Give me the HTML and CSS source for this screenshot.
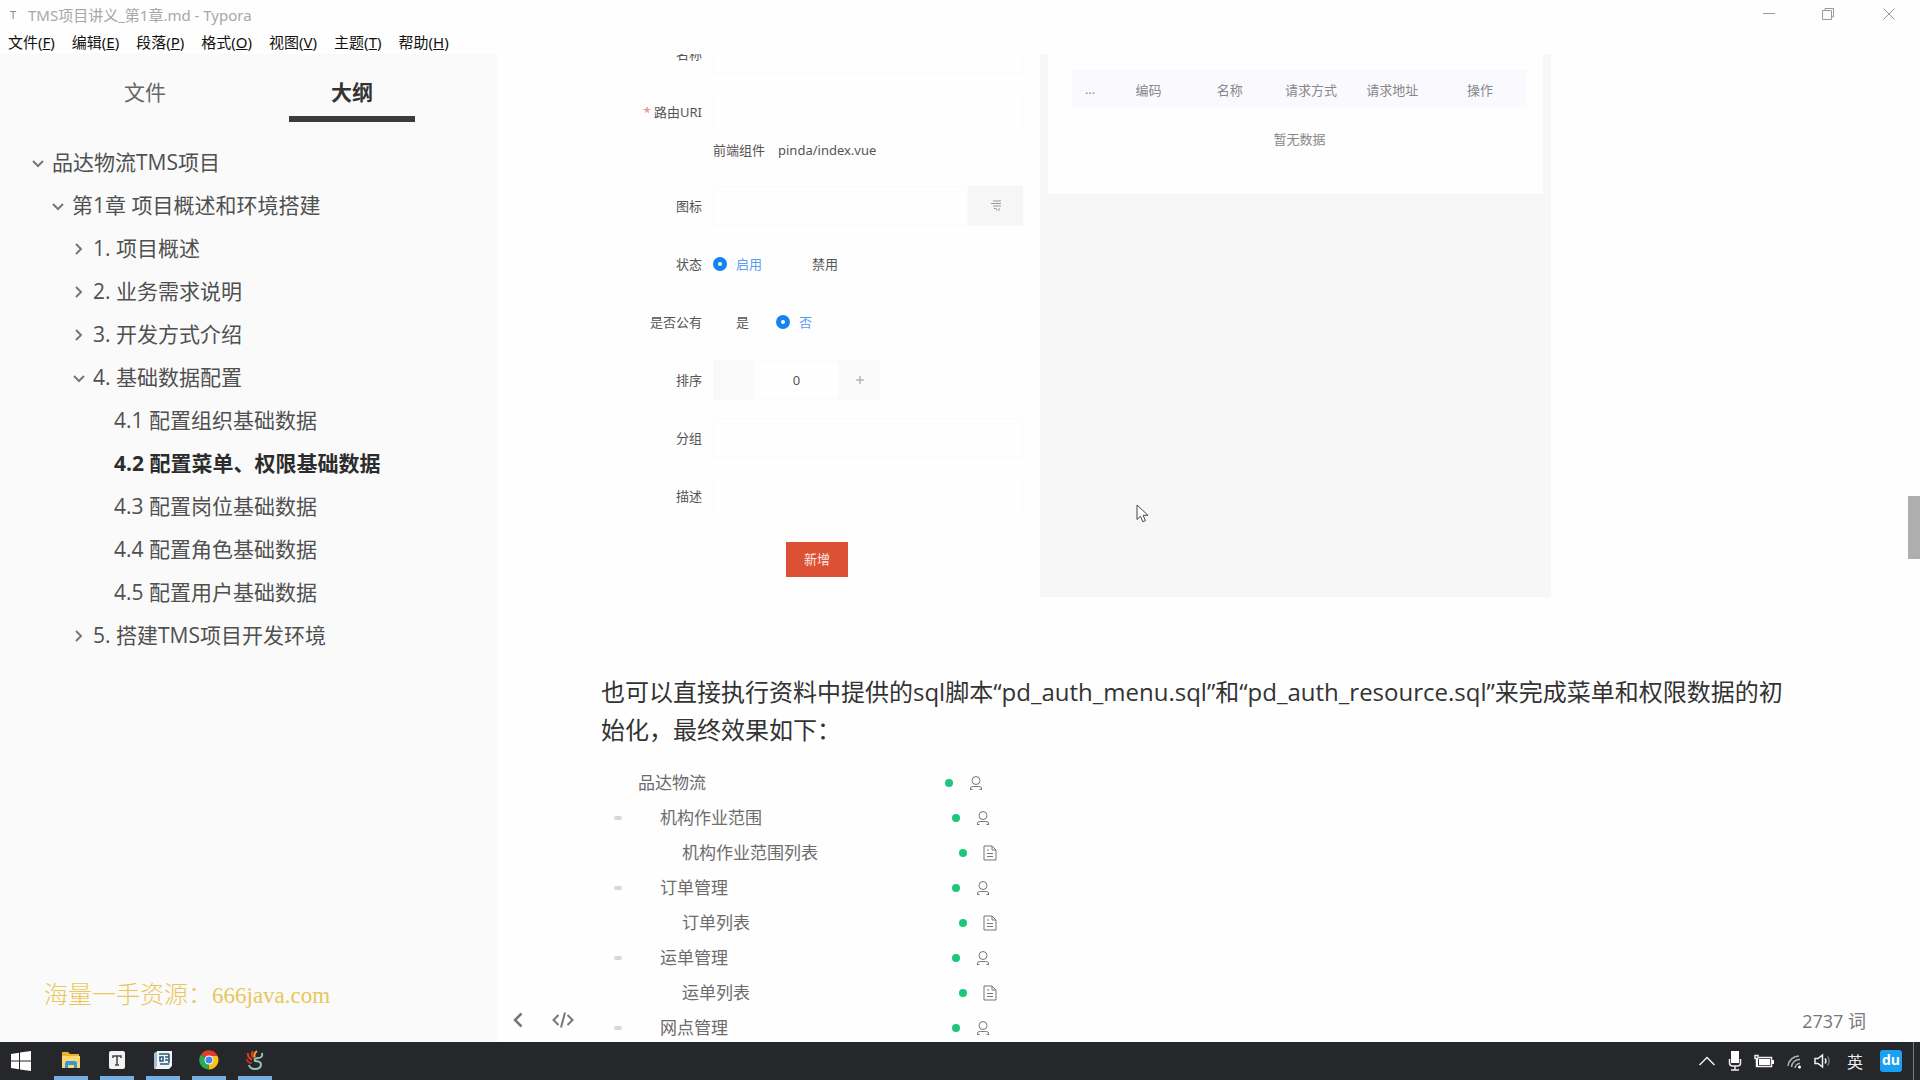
FILE: index.html
```html
<!DOCTYPE html>
<html lang="zh-CN">
<head>
<meta charset="utf-8">
<title>TMS项目讲义_第1章.md - Typora</title>
<link rel="stylesheet" href="styles.css">
</head>
<body>
<header class="titlebar">
  <div class="title-row">
    <span class="app-icon">T</span>
    <span class="title">TMS项目讲义_第1章.md - Typora</span>
    <div class="window-buttons">
      <button aria-label="最小化"><svg width="14" height="14" viewBox="0 0 14 14"><path d="M1 6.500h12"/></svg></button>
      <button aria-label="还原"><svg width="14" height="14" viewBox="0 0 14 14"><path d="M1.500 3.500h9v9h-9zM4 3V1.500h8.500V10h-1.500"/></svg></button>
      <button aria-label="关闭"><svg width="14" height="14" viewBox="0 0 14 14"><path d="M1.500 1.500l11 11M12.500 1.500l-11 11"/></svg></button>
    </div>
  </div>
  <nav class="menu">
    <button>文件(<u>F</u>)</button>
    <button>编辑(<u>E</u>)</button>
    <button>段落(<u>P</u>)</button>
    <button>格式(<u>O</u>)</button>
    <button>视图(<u>V</u>)</button>
    <button>主题(<u>T</u>)</button>
    <button>帮助(<u>H</u>)</button>
  </nav>
</header>

<main class="workspace">
  <aside class="sidebar">
    <div class="tabs">
      <button class="tab">文件</button>
      <button class="tab active">大纲</button>
    </div>
    <ul class="outline">
      <li class="l1"><svg class="chev" viewBox="0 0 12 12"><path d="M1 4l5 5 5-5"/></svg><a href="#">品达物流TMS项目</a></li>
      <li class="l2"><svg class="chev" viewBox="0 0 12 12"><path d="M1 4l5 5 5-5"/></svg><a href="#">第1章 项目概述和环境搭建</a></li>
      <li class="l3"><svg class="chev" viewBox="0 0 12 12"><path d="M3 1l5 5-5 5"/></svg><a href="#">1. 项目概述</a></li>
      <li class="l3"><svg class="chev" viewBox="0 0 12 12"><path d="M3 1l5 5-5 5"/></svg><a href="#">2. 业务需求说明</a></li>
      <li class="l3"><svg class="chev" viewBox="0 0 12 12"><path d="M3 1l5 5-5 5"/></svg><a href="#">3. 开发方式介绍</a></li>
      <li class="l3"><svg class="chev" viewBox="0 0 12 12"><path d="M1 4l5 5 5-5"/></svg><a href="#">4. 基础数据配置</a></li>
      <li class="l4"><a href="#">4.1 配置组织基础数据</a></li>
      <li class="l4 current"><a href="#">4.2 配置菜单、权限基础数据</a></li>
      <li class="l4"><a href="#">4.3 配置岗位基础数据</a></li>
      <li class="l4"><a href="#">4.4 配置角色基础数据</a></li>
      <li class="l4"><a href="#">4.5 配置用户基础数据</a></li>
      <li class="l3"><svg class="chev" viewBox="0 0 12 12"><path d="M3 1l5 5-5 5"/></svg><a href="#">5. 搭建TMS项目开发环境</a></li>
    </ul>
    <p class="watermark">海量一手资源：<span>666java.com</span></p>
  </aside>

  <section class="document">
    <div class="figure">
      <form class="menu-form">
        <label for="name">名称</label>
        <input id="name" class="box" type="text">

        <label for="uri"><span class="required">*</span> 路由URI</label>
        <div>
          <input id="uri" class="box" type="text">
          <p class="hint"><span>前端组件</span><span>pinda/index.vue</span></p>
        </div>

        <label for="icon">图标</label>
        <div class="joined">
          <input id="icon" class="box" type="text">
          <button type="button" class="pick" aria-label="选择图标"><svg width="12" height="14" viewBox="0 0 12 14"><path d="M3 2h8M1 4.500h10M3 7h8M4 9.500h2l1 2M9 9v3"/></svg></button>
        </div>

        <span class="label">状态</span>
        <div class="radios">
          <label><input type="radio" name="state" checked><span>启用</span></label>
          <label><input type="radio" name="state"><span>禁用</span></label>
        </div>

        <span class="label">是否公有</span>
        <div class="radios">
          <label><input type="radio" name="public"><span>是</span></label>
          <label><input type="radio" name="public" checked><span>否</span></label>
        </div>

        <label for="order">排序</label>
        <div class="stepper">
          <button type="button" aria-label="减少"></button>
          <input id="order" type="text" value="0">
          <button type="button" aria-label="增加"><svg width="10" height="10" viewBox="0 0 10 10"><path d="M1 5h8M5 1v8"/></svg></button>
        </div>

        <label for="group">分组</label>
        <input id="group" class="box" type="text">

        <label for="desc">描述</label>
        <input id="desc" class="box" type="text">

        <button type="button" class="submit">新增</button>
      </form>

      <div class="resource-panel">
        <div class="card">
          <table>
            <thead>
              <tr><th class="narrow">...</th><th>编码</th><th>名称</th><th>请求方式</th><th>请求地址</th><th class="wide">操作</th></tr>
            </thead>
            <tbody>
              <tr><td colspan="6">暂无数据</td></tr>
            </tbody>
          </table>
        </div>
        <svg class="cursor" width="14" height="20" viewBox="0 0 14 20"><path d="M1 1v14.500l3.500-3.200 2.300 5.400 2.600-1.100-2.300-5.300H12z"/></svg>
      </div>
    </div>

    <p class="prose">也可以直接执行资料中提供的sql脚本“pd_auth_menu.sql”和“pd_auth_resource.sql”来完成菜单和权限数据的初始化，最终效果如下：</p>

    <svg class="symbols" aria-hidden="true">
      <symbol id="person" viewBox="0 0 14 16"><path d="M7 1.500a4 4 0 1 1 0 8 4 4 0 0 1 0-8zM1.500 15v-2q0-1.500 3-1.500h5q3 0 3 1.500v2M1.500 14.500h2M10.500 14.500h2"/></symbol>
      <symbol id="page" viewBox="0 0 14 16"><path d="M1 1h8l4 4v10H1zM9 1v4h4M4 5h2M4 8.500h6M4 11.500h6"/></symbol>
    </svg>
    <ul class="tree">
      <li class="d0"><i class="caret"></i><span class="name">品达物流</span><span class="status"><i class="dot"></i><svg><use href="#person"/></svg></span></li>
      <li class="d1"><i class="caret on"></i><span class="name">机构作业范围</span><span class="status"><i class="dot"></i><svg><use href="#person"/></svg></span></li>
      <li class="d2"><i class="caret"></i><span class="name">机构作业范围列表</span><span class="status"><i class="dot"></i><svg><use href="#page"/></svg></span></li>
      <li class="d1"><i class="caret on"></i><span class="name">订单管理</span><span class="status"><i class="dot"></i><svg><use href="#person"/></svg></span></li>
      <li class="d2"><i class="caret"></i><span class="name">订单列表</span><span class="status"><i class="dot"></i><svg><use href="#page"/></svg></span></li>
      <li class="d1"><i class="caret on"></i><span class="name">运单管理</span><span class="status"><i class="dot"></i><svg><use href="#person"/></svg></span></li>
      <li class="d2"><i class="caret"></i><span class="name">运单列表</span><span class="status"><i class="dot"></i><svg><use href="#page"/></svg></span></li>
      <li class="d1"><i class="caret on"></i><span class="name">网点管理</span><span class="status"><i class="dot"></i><svg><use href="#person"/></svg></span></li>
    </ul>

    <div class="statusbar">
      <button aria-label="侧边栏"><svg width="10" height="16" viewBox="0 0 10 16"><path d="M8.500 1.500L2 8l6.500 6.500" stroke-width="2.500"/></svg></button>
      <button aria-label="源代码模式"><svg width="22" height="18" viewBox="0 0 22 18"><path d="M6.500 4L1.500 9l5 5M15.500 4l5 5-5 5M13 1.500L9 16.500"/></svg></button>
      <span class="count">2737 词</span>
    </div>
    <div class="scroll-thumb"></div>
  </section>
</main>

<footer class="taskbar">
  <button class="start" aria-label="开始"><svg width="20" height="20" viewBox="0 0 20 20"><path fill="#fff" d="M0 3l8-1.200v7.700H0zM9 1.600L20 0v9.500H9zM0 10.500h8v7.700L0 17zM9 10.500h11V20L9 18.400z"/></svg></button>
  <button class="app" aria-label="文件资源管理器"><svg width="20" height="20" viewBox="0 0 20 20"><path fill="#e8b22c" d="M1 2h6l2 2h9v5H1z"/><path fill="#fbd774" d="M1 6h18v12H1z"/><path fill="#3d95d8" d="M4 18v-5q0-2 2-2h8q2 0 2 2v5h-3v-3H7v3z"/></svg></button>
  <button class="app" aria-label="Typora"><svg width="20" height="20" viewBox="0 0 20 20"><rect x="2" y="1" width="16" height="18" rx="2" fill="#f2f2f2"/><path fill="none" stroke="#444" stroke-width="1.500" d="M6 8V6h8v2M10 6v9M8 15h4"/></svg></button>
  <button class="app" aria-label="文档"><svg width="20" height="20" viewBox="0 0 20 20"><path fill="#a9bfd2" d="M1 3l4-2v16l-4 2z"/><path fill="#edf4fa" d="M4 1h15v15l-3 3H2l2-3z"/><path fill="none" stroke="#31546f" stroke-width="1.500" d="M6 4h10M7 7h3v4H7zM12 7h4M12 10h4M7 14h9M16 4v9"/></svg></button>
  <button class="app" aria-label="Chrome"><svg width="20" height="20" viewBox="0 0 20 20"><path fill="#e33b2e" d="M10 10L2 4.500A9.500 9.500 0 0 1 18.600 6z"/><path fill="#fbc116" d="M10 10V6h8.600A9.500 9.500 0 0 1 9.500 19.500z"/><path fill="#2da94f" d="M10 10l-.5 9.500A9.500 9.500 0 0 1 2 4.500z"/><circle cx="10" cy="10" r="4.500" fill="#fff"/><circle cx="10" cy="10" r="3.500" fill="#4386f5"/></svg></button>
  <button class="app" aria-label="录屏工具"><svg width="20" height="20" viewBox="0 0 20 20" stroke-width="2"><path stroke="#e33a1e" d="M8 1q-3 4 1 7M3 3q-1 4 4 7"/><path stroke="#f0a02c" d="M12 1q-4 3-2 6"/><path stroke="#b92c22" d="M2 9q0 4 5 4"/><path stroke="#93c7b4" d="M17 3q1 5-4 5-4 0-3 3 5 0 6 3 0 5-6 5-5 0-6-4"/></svg></button>
  <div class="tray">
    <svg width="18" height="12" viewBox="0 0 18 12"><path d="M1.500 10L9 2.500l7.500 7.500"/></svg>
    <svg width="14" height="20" viewBox="0 0 14 20"><path class="solid" d="M3 0h8v12H3z"/><path d="M1.500 8v4q0 3 3 3h5q3 0 3-3V8M7 15v4M3 19h8"/></svg>
    <svg width="20" height="14" viewBox="0 0 20 14"><path d="M1 1.500h3v3H1zM2.500 4v8.500h15v-9H5"/><path class="solid" d="M5 5h11v6H5zM18 6h2v4h-2zM2 5h2v7H2z"/></svg>
    <svg width="16" height="16" viewBox="0 0 16 16"><path d="M2 13A11 11 0 0 1 13 3M5.500 14A8 8 0 0 1 14 6.500M9 15a5 5 0 0 1 5-4.500" opacity=".7"/><circle class="solid" cx="13.500" cy="14" r="1.500"/></svg>
    <svg width="18" height="16" viewBox="0 0 18 16"><path d="M1 5.500h3L8.500 2v12L4 10.500H1zM11 5.500q2 2.500 0 5"/><path d="M13.500 3.500q3.500 4.500 0 9" opacity=".4"/></svg>
    <span class="ime">英</span>
    <span class="du">du</span>
  </div>
</footer>
</body>
</html>
```
FILE: styles.css
```css
* { box-sizing: border-box; }

body {
  margin: 0;
  height: 100vh;
  display: flex;
  flex-direction: column;
  overflow: hidden;
  background: #fefefe;
  color: #333;
  font-family: "Open Sans", "Noto Sans CJK SC", sans-serif;
}

button {
  margin: 0;
  padding: 0;
  border: 0;
  background: none;
  color: inherit;
  font: inherit;
}

ul, p { margin: 0; padding: 0; list-style: none; }
a { color: inherit; text-decoration: none; }
svg { fill: none; display: block; }

/* Title bar and menu */
.titlebar { flex: none; height: 54px; }
.title-row {
  display: flex;
  align-items: center;
  height: 28px;
  padding-left: 8px;
  font-family: "Noto Sans", "Noto Sans CJK SC", sans-serif;
  font-size: 15px;
  color: #a8a8a8;
}
.app-icon { width: 20px; font-size: 11px; color: #888; padding-left: 2px; }
.window-buttons { display: flex; margin-left: auto; }
.window-buttons button { width: 59px; height: 28px; display: grid; place-items: center; }
.window-buttons button:last-child { width: 63px; }
.window-buttons svg { stroke: #999; }
.menu {
  display: flex;
  gap: 17px;
  padding-left: 8px;
  font-family: "Noto Sans", "Noto Sans CJK SC", sans-serif;
  font-size: 15px;
  line-height: 28px;
  color: #111;
}

/* Sidebar */
.workspace { flex: 1; min-height: 0; display: flex; }
.sidebar {
  flex: none;
  width: 497px;
  display: flex;
  flex-direction: column;
  background: #fafafa;
  font-size: 21px;
}
.tabs { display: flex; justify-content: center; gap: 81px; padding-top: 12px; }
.tab { width: 126px; height: 56px; color: #666; border-bottom: 6px solid transparent; }
.tab.active { font-weight: 700; color: #333; border-color: #3b3b3b; }
.outline { flex: 1; padding-top: 19px; color: #505050; }
.outline li { display: flex; align-items: center; gap: 8px; height: 43px; line-height: 43px; }
.chev { width: 12px; height: 12px; stroke: #777; stroke-width: 2; }
.l1 { padding-left: 32px; }
.l2 { padding-left: 52px; }
.l3 { padding-left: 73px; }
.l4 { padding-left: 114px; }
.outline .current { font-weight: 700; color: #2c2c2c; }
.watermark {
  padding: 0 0 28px 44px;
  font-family: "Liberation Serif", "Noto Sans CJK SC", serif;
  font-size: 24px;
  font-weight: 300;
  line-height: 36px;
  color: #e8c65a;
}
.watermark span { font-size: 23px; }

/* Document */
.document {
  position: relative;
  flex: 1;
  min-width: 0;
  overflow: hidden;
  padding: 0 130px 0 104px;
}
.figure { display: flex; gap: 17px; margin-top: -20px; max-width: 950px; }
.menu-form {
  flex: none;
  display: grid;
  grid-template-columns: 101px 310px;
  column-gap: 11px;
  row-gap: 18px;
  padding-bottom: 20px;
  font-family: "Noto Sans", "Noto Sans CJK SC", sans-serif;
  font-size: 13px;
  line-height: 40px;
  color: #555;
}
.menu-form > label, .label { text-align: right; }
.required { color: #f08080; }
.box {
  display: block;
  width: 100%;
  height: 40px;
  border: 1px solid #fafafa;
  background: transparent;
}
.hint { display: flex; gap: 13px; line-height: 36px; }
.joined { display: flex; }
.pick { flex: none; width: 55px; height: 40px; display: grid; place-items: center; background: #f6f6f6; }
.pick svg, .stepper svg { stroke: #999; }
.radios { display: flex; gap: 27px; }
.radios label { display: flex; align-items: center; gap: 9px; }
.radios input {
  appearance: none;
  width: 14px;
  height: 14px;
  margin: 0;
  border: 1px solid #fcfcfc;
  border-radius: 50%;
}
.radios input:checked { border: 5px solid #1684ee; background: #fff; }
.radios input:checked + span { color: #5b9cf3; }
.stepper { display: flex; width: 167px; height: 40px; }
.stepper button { width: 40px; display: grid; place-items: center; background: #f9f9f9; }
.stepper input {
  flex: 1;
  min-width: 0;
  height: 40px;
  padding: 0;
  border: 1px solid #fafafa;
  background: transparent;
  text-align: center;
  font: inherit;
  line-height: 38px;
  color: #555;
}
.submit {
  grid-column: 2;
  width: 62px;
  height: 35px;
  margin: 8px 0 0 73px;
  background: #dc5134;
  color: #fde8e2;
  line-height: 35px;
}
.resource-panel { position: relative; flex: 1; padding: 0 8px; background: #f7f7f7; }
.card { height: 160px; padding: 36px 16px 0 24px; background: #fefefe; }
.resource-panel table {
  width: 100%;
  border-collapse: collapse;
  table-layout: fixed;
  font-size: 13px;
  color: #888;
}
th { height: 38px; padding: 0; background: #fafafe; font-weight: 400; }
th.narrow { width: 36px; }
th.wide { width: 94px; }
td { height: 60px; padding: 0; text-align: center; }
.cursor { position: absolute; left: 96px; top: 470px; fill: #fff; stroke: #444; }

.prose { margin: 76px 0 16px; font-size: 24px; line-height: 38px; color: #333; }

.symbols { position: absolute; width: 0; height: 0; }
.tree { font-size: 17px; color: #6c6c6c; }
.tree li { display: grid; grid-template-columns: 37px 307px auto; align-items: center; height: 35px; line-height: 35px; }
.caret { width: 8px; height: 4px; margin-left: 13px; }
.caret.on { background: #d8d8d8; border-radius: 2px; }
.d1 .name { padding-left: 22px; }
.d2 .name { padding-left: 44px; }
.status { display: flex; align-items: center; gap: 16px; }
.d1 .status { padding-left: 7px; }
.d2 .status { padding-left: 14px; }
.dot { width: 8px; height: 8px; border-radius: 50%; background: #1cc67c; }
.status svg { width: 14px; height: 16px; stroke: #777; }

.statusbar {
  position: absolute;
  left: 0;
  right: 12px;
  bottom: 0;
  display: flex;
  align-items: center;
  gap: 29px;
  height: 44px;
  padding: 0 42px 0 16px;
  font-size: 18px;
  color: #777;
}
.statusbar svg { stroke: #777; stroke-width: 2; }
.count { margin-left: auto; }
.scroll-thumb { position: absolute; right: 0; top: 442px; width: 12px; height: 63px; background: #aeaeae; }

/* Taskbar */
.taskbar { flex: none; display: flex; height: 38px; padding-right: 6px; background: #26272b; }
.taskbar button { display: grid; place-items: center; }
.start { width: 42px; }
.app { width: 34px; margin-left: 12px; border-bottom: 4px solid #76b0e2; }
.app svg { margin-top: 2px; }
.tray {
  display: flex;
  align-items: center;
  gap: 12px;
  margin-left: auto;
  padding-right: 11px;
  border-right: 1px solid #77797c;
  color: #eee;
}
.tray svg { stroke: #eee; stroke-width: 1.500; }
.tray .solid { fill: #fff; stroke: none; }
.ime { width: 22px; font-size: 16px; text-align: center; }
.du {
  width: 22px;
  height: 22px;
  margin-left: 2px;
  border-radius: 3px;
  background: #19a0f2;
  color: #fff;
  font-size: 14px;
  font-weight: 700;
  line-height: 20px;
  text-align: center;
}
```
